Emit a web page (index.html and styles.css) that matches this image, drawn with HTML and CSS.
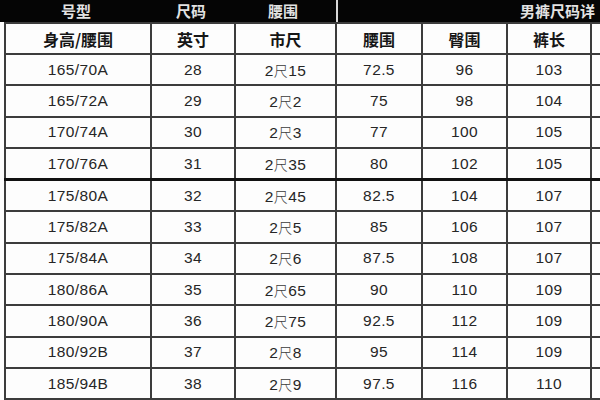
FILE: index.html
```html
<!DOCTYPE html>
<html lang="zh">
<head>
<meta charset="utf-8">
<link rel="stylesheet" href="styles.css">
</head>
<body>
<div class="page">
  <div class="banner">
    <span class="b b1">号型</span>
    <span class="b b2">尺码</span>
    <span class="b b3">腰围</span>
    <span class="b b4">男裤尺码详</span>
  </div>
  <table class="chart">
    <colgroup>
      <col class="c1"><col class="c2"><col class="c3"><col class="c4"><col class="c5"><col class="c6"><col class="c7">
    </colgroup>
    <thead>
      <tr class="head"><th>身高/腰围</th><th>英寸</th><th>市尺</th><th>腰围</th><th>臀围</th><th>裤长</th><th></th></tr>
    </thead>
    <tbody>
      <tr><td>165/70A</td><td>28</td><td>2<span class="cj">尺</span>15</td><td>72.5</td><td>96</td><td>103</td><td></td></tr>
      <tr><td>165/72A</td><td>29</td><td>2<span class="cj">尺</span>2</td><td>75</td><td>98</td><td>104</td><td></td></tr>
      <tr><td>170/74A</td><td>30</td><td>2<span class="cj">尺</span>3</td><td>77</td><td>100</td><td>105</td><td></td></tr>
      <tr><td>170/76A</td><td>31</td><td>2<span class="cj">尺</span>35</td><td>80</td><td>102</td><td>105</td><td></td></tr>
      <tr class="thick"><td>175/80A</td><td>32</td><td>2<span class="cj">尺</span>45</td><td>82.5</td><td>104</td><td>107</td><td></td></tr>
      <tr><td>175/82A</td><td>33</td><td>2<span class="cj">尺</span>5</td><td>85</td><td>106</td><td>107</td><td></td></tr>
      <tr><td>175/84A</td><td>34</td><td>2<span class="cj">尺</span>6</td><td>87.5</td><td>108</td><td>107</td><td></td></tr>
      <tr><td>180/86A</td><td>35</td><td>2<span class="cj">尺</span>65</td><td>90</td><td>110</td><td>109</td><td></td></tr>
      <tr><td>180/90A</td><td>36</td><td>2<span class="cj">尺</span>75</td><td>92.5</td><td>112</td><td>109</td><td></td></tr>
      <tr><td>180/92B</td><td>37</td><td>2<span class="cj">尺</span>8</td><td>95</td><td>114</td><td>109</td><td></td></tr>
      <tr><td>185/94B</td><td>38</td><td>2<span class="cj">尺</span>9</td><td>97.5</td><td>116</td><td>110</td><td></td></tr>
    </tbody>
  </table>
</div>
</body>
</html>
```

FILE: styles.css
```css
html, body {
  margin: 0;
  padding: 0;
  background: #ffffff;
}
.page {
  width: 600px;
  height: 400px;
  overflow: hidden;
  background: #fdfdfd;
}
.banner {
  display: flex;
  height: 22px;
  background: #050505;
  width: 600px;
  white-space: nowrap;
}
.b {
  display: block;
  text-align: center;
  color: #e2e2e2;
  font-family: "Noto Sans CJK SC", "DejaVu Sans", sans-serif;
  font-weight: 700;
  font-size: 15px;
  line-height: 22px;
  height: 22px;
}
.b1 { width: 152px; }
.b2 { width: 78px; }
.b3 { width: 106px; }
.b4 {
  flex: 1;
  text-align: left;
  padding-left: 182px;
  border-left: 2px solid #d8d8d8;
}
.chart {
  margin-left: 4px;
  border-collapse: collapse;
  table-layout: fixed;
  width: 670px;
  font-family: "Liberation Sans", "Noto Sans CJK SC", sans-serif;
  color: #262626;
}
.c1 { width: 146px; }
.c2 { width: 84px; }
.c3 { width: 101px; }
.c4 { width: 86px; }
.c5 { width: 85px; }
.c6 { width: 84px; }
.c7 { width: 84px; }
.chart th, .chart td {
  border: 2px solid #3c3c3c;
  text-align: center;
  padding: 0;
  overflow: hidden;
  white-space: nowrap;
}
.chart th {
  height: 29px;
  font-family: "Noto Sans CJK SC", sans-serif;
  font-weight: 700;
  font-size: 16px;
  color: #161616;
}
.chart td {
  height: 29.3px;
  font-size: 15.5px;
  letter-spacing: 0.4px;
}
.cj {
  font-family: "Noto Sans CJK SC", sans-serif;
  font-weight: 300;
  font-size: 14px;
  color: #3a3a3a;
}
.chart tr.thick td {
  border-top: 3px solid #111111;
}
```
